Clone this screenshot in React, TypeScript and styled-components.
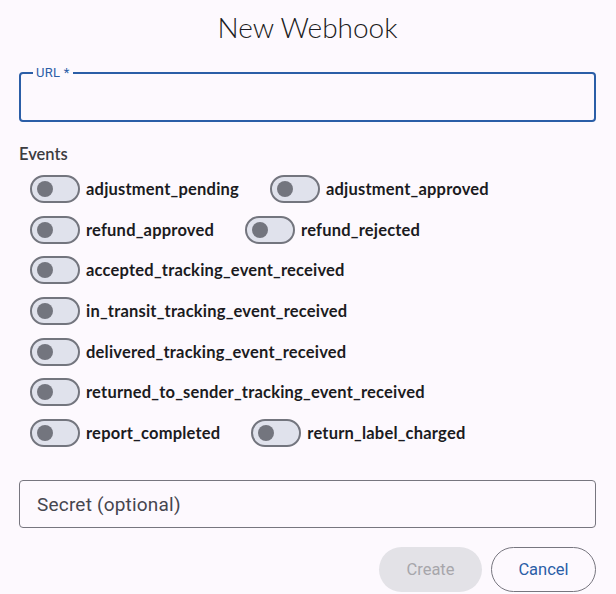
import React from "react";
import styled, { createGlobalStyle } from "styled-components";

const GlobalStyle = createGlobalStyle`
  html, body { margin: 0; padding: 0; background: #fdf9fe; }
  body { font-family: "Lato", "Liberation Sans", sans-serif; }
`;

const Dialog = styled.div`
  width: 616px;
  height: 594px;
  box-sizing: border-box;
  padding: 0 20px 0 19px;
  background: #fdf9fe;
  display: flex;
  flex-direction: column;
`;

const Title = styled.h2`
  margin: 0 0 17px;
  text-align: center;
  font-size: 28px;
  line-height: 55px;
  font-weight: 300;
  color: #1b1b21;
`;

const OutlinedField = styled.div<{ $focused?: boolean }>`
  position: relative;
  box-sizing: border-box;
  height: ${(p) => (p.$focused ? 50 : 48)}px;
  border: ${(p) => (p.$focused ? "2px solid #2b5ea7" : "1px solid #77767f")};
  border-radius: 4px;
  display: flex;
  align-items: center;
  padding: 0 17px;
  font-family: "Roboto", "Liberation Sans", sans-serif;
`;

const FloatingLabel = styled.span`
  position: absolute;
  left: 12px;
  top: -9px;
  padding: 0 3px;
  background: #fdf9fe;
  font-size: 13px;
  line-height: 16px;
  color: #2b5ea7;
  letter-spacing: 0.3px;
`;

const Placeholder = styled.span`
  font-size: 19px;
  color: #46464f;
  letter-spacing: 0.2px;
`;

const SectionLabel = styled.div`
  margin-top: 22px;
  font-size: 16.5px;
  line-height: 20px;
  font-weight: 600;
  color: #3c3c41;
`;

const EventList = styled.div`
  margin-top: 11px;
  padding-left: 11px;
  display: flex;
  flex-direction: column;
  gap: 12.7px;
`;

const EventRow = styled.div`
  display: flex;
  align-items: center;
  gap: 31px;
  height: 28px;
`;

const SwitchItem = styled.label`
  display: flex;
  align-items: center;
  gap: 6px;
  cursor: pointer;
`;

const Track = styled.span`
  box-sizing: border-box;
  width: 50px;
  height: 28px;
  border-radius: 14px;
  border: 2px solid #73757e;
  background: #e0e2ec;
  display: flex;
  align-items: center;
  padding-left: 5px;
`;

const Thumb = styled.span`
  width: 16px;
  height: 16px;
  border-radius: 50%;
  background: #73757e;
`;

const EventName = styled.span`
  font-size: 16.5px;
  font-weight: 700;
  color: #1b1b21;
  letter-spacing: 0.2px;
`;

const SecretField = styled(OutlinedField)`
  margin-top: 33px;
`;

const Actions = styled.div`
  margin-top: 19px;
  display: flex;
  justify-content: flex-end;
  gap: 9px;
`;

const Button = styled.button<{ $variant: "filled" | "outlined" }>`
  box-sizing: border-box;
  height: 45px;
  border-radius: 23px;
  font-family: "Roboto", "Liberation Sans", sans-serif;
  font-size: 16.5px;
  padding: 0;
  width: ${(p) => (p.$variant === "filled" ? 103 : 105)}px;
  background: ${(p) => (p.$variant === "filled" ? "#e3e2e7" : "transparent")};
  color: ${(p) => (p.$variant === "filled" ? "#a7a6ab" : "#2b5ea7")};
  border: ${(p) => (p.$variant === "filled" ? "none" : "1px solid #77767f")};
`;

const rows: string[][] = [
  ["adjustment_pending", "adjustment_approved"],
  ["refund_approved", "refund_rejected"],
  ["accepted_tracking_event_received"],
  ["in_transit_tracking_event_received"],
  ["delivered_tracking_event_received"],
  ["returned_to_sender_tracking_event_received"],
  ["report_completed", "return_label_charged"],
];

export default function App() {
  return (
    <>
      <GlobalStyle />
      <Dialog>
        <Title>New Webhook</Title>
        <OutlinedField $focused>
          <FloatingLabel>URL *</FloatingLabel>
        </OutlinedField>
        <SectionLabel>Events</SectionLabel>
        <EventList>
          {rows.map((row, i) => (
            <EventRow key={i}>
              {row.map((name) => (
                <SwitchItem key={name}>
                  <Track>
                    <Thumb />
                  </Track>
                  <EventName>{name}</EventName>
                </SwitchItem>
              ))}
            </EventRow>
          ))}
        </EventList>
        <SecretField>
          <Placeholder>Secret (optional)</Placeholder>
        </SecretField>
        <Actions>
          <Button $variant="filled" disabled>
            Create
          </Button>
          <Button $variant="outlined">Cancel</Button>
        </Actions>
      </Dialog>
    </>
  );
}
